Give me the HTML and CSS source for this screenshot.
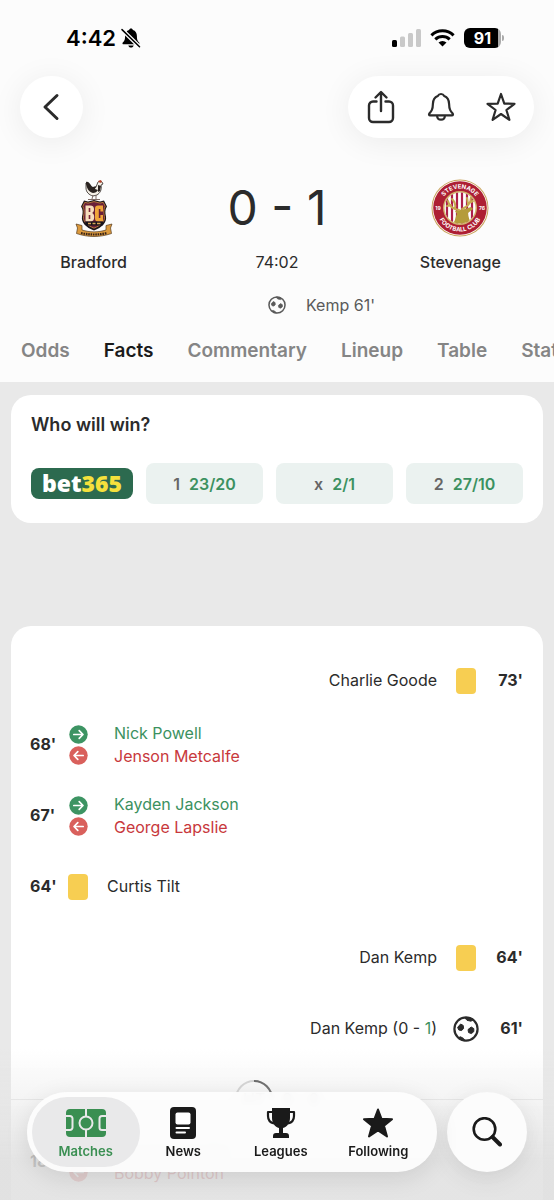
FILE: index.html
```html
<!DOCTYPE html>
<html lang="en">

<head>
    <meta charset="UTF-8">
    <meta name="viewport" content="width=device-width, initial-scale=1.0">
    <title>Bradford - Stevenage</title>
    <link rel="stylesheet" href="styles.css">
</head>

<body>
    <!-- shared icons -->
    <svg class="sprite" aria-hidden="true">
        <symbol id="ball" viewBox="0 0 26 26">
            <circle cx="13" cy="13" r="11.600" fill="none" stroke="currentColor" stroke-width="2.200" />
            <path d="M7.600 8l2.600 1.400.4 3-2 2.200-2.800-.6-1.200-2.600z" fill="currentColor" stroke="currentColor" stroke-width="1" stroke-linejoin="round" />
            <path d="M18.200 11l2.600 1.600v3l-2.400 2-2.800-1-.6-3z" fill="currentColor" stroke="currentColor" stroke-width="1" stroke-linejoin="round" />
            <path d="M11.500 1.500l2.500 2.800 4 .9 2-1.400-3-2zM5.500 21.600l2-.8 3 1.600 1.500 2.400-3.500-.8z" fill="currentColor" stroke="currentColor" stroke-width="1" stroke-linejoin="round" />
        </symbol>
        <symbol id="sub-in" viewBox="0 0 19 19">
            <circle cx="9.500" cy="9.500" r="9.200" fill="#3d9463" />
            <path d="M4.800 9.500h9M10.200 5.700l3.800 3.800-3.800 3.800" fill="none" stroke="#fff" stroke-width="1.700" stroke-linecap="round" stroke-linejoin="round" />
        </symbol>
        <symbol id="sub-out" viewBox="0 0 19 19">
            <circle cx="9.500" cy="9.500" r="9.200" fill="#d9605c" />
            <path d="M14.200 9.500h-9M8.800 5.700L5 9.500l3.800 3.800" fill="none" stroke="#fff" stroke-width="1.700" stroke-linecap="round" stroke-linejoin="round" />
        </symbol>
    </svg>

    <header class="header">
        <div class="status-bar">
            <div class="status-left">
                <span class="clock">4:42</span>
                <svg width="20" height="20" viewBox="0 0 20 20">
                    <path d="M10 .5c1.100 0 1.700.6 1.900 1.500 2.700.8 4 3 4 6 0 4 .8 5 2.200 6.500.7.8.3 1.800-.8 1.800H2.600c-1.100 0-1.500-1-.8-1.800C3.300 13 4.100 12 4.100 8c0-3 1.300-5.200 4-6 .2-.9.800-1.500 1.900-1.500zM7.300 17.500h5.400c-.3 1.300-1.300 2.100-2.700 2.100s-2.400-.8-2.700-2.100z" fill="#000" />
                    <path d="M1 1.600l17.500 17.200" stroke="#fff" stroke-width="4" />
                    <path d="M1 1.600l17.500 17.200" stroke="#000" stroke-width="1.500" stroke-linecap="round" />
                </svg>
            </div>
            <div class="status-right">
                <svg width="29" height="18" viewBox="0 0 29 18">
                    <rect x="0" y="11" width="5" height="7" rx="1.500" fill="#000" />
                    <rect x="8" y="7.500" width="5" height="10.500" rx="1.500" fill="#c9c9c9" />
                    <rect x="16" y="4" width="5" height="14" rx="1.500" fill="#c9c9c9" />
                    <rect x="24" y="0" width="5" height="18" rx="1.500" fill="#c9c9c9" />
                </svg>
                <svg width="25" height="18" viewBox="0 0 25 18">
                    <path d="M1.400 6.300a16 16 0 0 1 22.200 0M5.300 10.300a10.500 10.500 0 0 1 14.400 0" fill="none" stroke="#000" stroke-width="3" />
                    <path d="M12.500 17.600l-4-4.100a5.800 5.800 0 0 1 8 0z" fill="#000" />
                </svg>
                <div class="battery"><span class="battery-level">91</span></div>
            </div>
        </div>

        <div class="toolbar">
            <button class="glass back-btn" aria-label="Back">
                <svg width="20" height="28" viewBox="0 0 20 28">
                    <path d="M15 2.500L3 14l12 11.500" fill="none" stroke="#2b2b2b" stroke-width="3" stroke-linecap="round" stroke-linejoin="round" />
                </svg>
            </button>
            <div class="glass actions">
                <button class="icon-btn" aria-label="Share">
                    <svg width="28" height="34" viewBox="0 0 28 34">
                        <path d="M9.500 11.500H6a4 4 0 0 0-4 4v12.500a4 4 0 0 0 4 4h16a4 4 0 0 0 4-4V15.500a4 4 0 0 0-4-4h-3.500M14 21V2.500M8.500 7.500L14 2l5.500 5.500" fill="none" stroke="#2b2b2b" stroke-width="2.400" stroke-linecap="round" stroke-linejoin="round" />
                    </svg>
                </button>
                <button class="icon-btn" aria-label="Notifications">
                    <svg width="28" height="30" viewBox="0 0 28 30">
                        <path d="M14 2c1.900 0 2.700 1 3.200 2 3.300 1.200 4.800 4 4.900 8 .1 5.500 1.400 7 3.600 9.600.6.800.3 1.800-.8 1.800H3.100c-1.100 0-1.400-1-.8-1.800C4.500 19 5.800 17.500 5.900 12c.1-4 1.600-6.800 4.900-8 .5-1 1.300-2 3.200-2zM10 23.500c.2 2.600 1.700 4.200 4 4.200s3.800-1.600 4-4.200" fill="none" stroke="#2b2b2b" stroke-width="2.200" stroke-linejoin="round" />
                    </svg>
                </button>
                <button class="icon-btn" aria-label="Follow match">
                    <svg width="30" height="30" viewBox="0 0 30 30">
                        <path d="M15 2l3.300 9.600 10.200.2-8.100 6.200 3 9.800L15 22l-8.400 5.800 3-9.800-8.100-6.200 10.200-.2z" fill="none" stroke="#2b2b2b" stroke-width="2.200" stroke-linejoin="round" />
                    </svg>
                </button>
            </div>
        </div>

        <div class="scoreboard">
            <div class="team">
                <svg width="58" height="58" viewBox="0 0 58 58">
                    <!-- bantam -->
                    <path d="M21 4l3 4c2 3 5 3 7 0l2-5c1-1 3-1 4 0l1 2-2 1c1 5-1 8-4 10l-4 1c-4-1-7-4-7-8z" fill="#f4efe6" stroke="#2a2320" stroke-width=".8" />
                    <path d="M21 3c4-1 4 4 7 5l3-1-1 3 3 1c-1 2-3 3-5 3-4-1-7-5-7-11zM33 6l3 1-1 5-2 1z" fill="#2a2320" />
                    <path d="M33 2l3-1 1 2-2 1z" fill="#b5432c" />
                    <path d="M28 16l-1 4M31 16v4M23 20.500h12" stroke="#7d6a64" stroke-width="1" />
                    <!-- shield -->
                    <path d="M29 21l6 1.500 4-1 3 6c-2 3-2 6-1 10 1 6-4 11-12 14-8-3-13-8-12-14 1-4 1-7-1-10l3-6 4 1z" fill="#1d151c" />
                    <path d="M29 22.600l6 1.500 3.200-.8 2 4c-1.600 3-1.600 6-.8 10.200.8 5-3.400 8.800-10.400 11.700-7-2.900-11.200-6.700-10.400-11.700.8-4.200.8-7.200-.8-10.200l2-4 3.200.8z" fill="#6b1f38" stroke="#c98b3f" stroke-width=".8" />
                    <path d="M20.500 26.500h4.500c3 0 4 1.500 4 4 0 2-.8 3-2 3.500 1.500.5 2.200 2 2.200 4 0 3-1.200 4.500-4.200 4.500h-4.500z" fill="#f7dfbd" />
                    <path d="M24.500 29v4M24.500 36v4" stroke="#7c2437" stroke-width="1.600" />
                    <path d="M38 26.500v6h-2.600V30h-1.600v9h1.600v-3H38v6.500h-5c-2 0-3-1-3-3v-10c0-2 1-3 3-3z" fill="#f0a63a" />
                    <path d="M20 42.500h18.500l-1 4H21z" fill="#17121a" />
                    <path d="M23 44.500h3M27.500 44.500h3M32 44.500h3.500" stroke="#d8a458" stroke-width="1.400" />
                    <!-- ribbon -->
                    <path d="M11 45l6 1.500v4.500c8 2.500 16 2.500 24 0v-4.500l6-1.500-1.500 4 1 5.500c-12 4-23 4-35 0l1-5.500z" fill="#dc9a3e" stroke="#54391d" stroke-width=".7" />
                    <path d="M16 54c9 2 17 2 26 0" fill="none" stroke="#3a2418" stroke-width="2.200" stroke-dasharray="1.600 .8" />
                </svg>
                <span class="team-name">Bradford</span>
            </div>
            <div class="score-box">
                <span class="score">0 - 1</span>
                <span class="timer">74:02</span>
            </div>
            <div class="team">
                <svg width="58" height="58" viewBox="0 0 58 58">
                    <defs>
                        <clipPath id="inner"><circle cx="29" cy="29" r="15.500" /></clipPath>
                        <path id="arc-top" d="M9.500 29a19.500 19.500 0 0 1 39 0" />
                        <path id="arc-bottom" d="M5.500 29a23.500 23.500 0 0 0 47 0" />
                    </defs>
                    <circle cx="29" cy="29" r="28.500" fill="#c9a25a" />
                    <circle cx="29" cy="29" r="27.500" fill="#fff" />
                    <circle cx="29" cy="29" r="26.800" fill="#ad1f33" />
                    <circle cx="29" cy="29" r="17" fill="#d2b36c" />
                    <circle cx="29" cy="29" r="15.500" fill="#fff" />
                    <g clip-path="url(#inner)">
                        <path d="M16 12v34M21 12v34M26 12v34M31 12v34M36 12v34M41 12v34" stroke="#ad1f4a" stroke-width="2.200" />
                        <path d="M20 46c5-3 4-8 6-11l-2-3 4-1 6-1 6-2 2 2-5 4c0 4 2 8 4 12z" fill="#b59c3b" />
                        <path d="M28 31c-6-1-10-4-11-9M24 29c1-4-1-7-3-9M20 26l-4 1M31 30c5-2 9-6 9-12M37 25l-1-6M38 24l4-2" fill="none" stroke="#c6a951" stroke-width="2" stroke-linecap="round" />
                    </g>
                    <g class="crest-text" text-anchor="middle">
                        <text><textPath href="#arc-top" startOffset="50%">STEVENAGE</textPath></text>
                        <text><textPath href="#arc-bottom" startOffset="50%">FOOTBALL CLUB</textPath></text>
                        <text class="crest-year" x="7" y="31">19</text>
                        <text class="crest-year" x="51" y="31">76</text>
                    </g>
                </svg>
                <span class="team-name">Stevenage</span>
            </div>
        </div>

        <div class="scorers">
            <svg class="scorer-ball"><use href="#ball" /></svg>
            <span class="scorer-name">Kemp 61'</span>
        </div>

        <nav class="tabs">
            <a href="#" class="tab">Odds</a>
            <a href="#" class="tab active">Facts</a>
            <a href="#" class="tab">Commentary</a>
            <a href="#" class="tab">Lineup</a>
            <a href="#" class="tab">Table</a>
            <a href="#" class="tab">Stats</a>
        </nav>
    </header>

    <main class="content">
        <section class="card odds">
            <h2 class="card-title">Who will win?</h2>
            <div class="odds-row">
                <a href="#" class="bookmaker">bet<span class="bookmaker-num">365</span></a>
                <button class="odd"><span class="odd-key">1</span>23/20</button>
                <button class="odd"><span class="odd-key">x</span>2/1</button>
                <button class="odd"><span class="odd-key">2</span>27/10</button>
            </div>
        </section>

        <section class="card events">
            <div class="event away">
                <span class="minute">73'</span>
                <span class="event-icon"><i class="yellow-card"></i></span>
                <span class="player">Charlie Goode</span>
            </div>
            <div class="event">
                <span class="minute">68'</span>
                <span class="event-icon"><svg class="sub"><use href="#sub-in" /></svg><svg class="sub"><use href="#sub-out" /></svg></span>
                <div class="players">
                    <span class="in">Nick Powell</span>
                    <span class="out">Jenson Metcalfe</span>
                </div>
            </div>
            <div class="event">
                <span class="minute">67'</span>
                <span class="event-icon"><svg class="sub"><use href="#sub-in" /></svg><svg class="sub"><use href="#sub-out" /></svg></span>
                <div class="players">
                    <span class="in">Kayden Jackson</span>
                    <span class="out">George Lapslie</span>
                </div>
            </div>
            <div class="event">
                <span class="minute">64'</span>
                <span class="event-icon"><i class="yellow-card"></i></span>
                <span class="player">Curtis Tilt</span>
            </div>
            <div class="event away">
                <span class="minute">64'</span>
                <span class="event-icon"><i class="yellow-card"></i></span>
                <span class="player">Dan Kemp</span>
            </div>
            <div class="event away">
                <span class="minute">61'</span>
                <span class="event-icon"><svg class="goal"><use href="#ball" /></svg></span>
                <span class="player">Dan Kemp (0 - <span class="in">1</span>)</span>
            </div>
            <div class="half-time">
                <span class="ring">HT
                    <svg class="ring-arc" viewBox="0 0 38 38">
                        <circle cx="19" cy="19" r="18" fill="none" stroke="#cfcfcf" stroke-width="2" />
                        <path d="M19 1a18 18 0 0 1 18 18" fill="none" stroke="#444" stroke-width="2" />
                    </svg>
                </span>
                <span>0 - 0</span>
            </div>
            <div class="event">
                <span class="minute">18'</span>
                <span class="event-icon"><svg class="sub"><use href="#sub-in" /></svg><svg class="sub"><use href="#sub-out" /></svg></span>
                <div class="players">
                    <span class="in">George Lapslie</span>
                    <span class="out">Bobby Pointon</span>
                </div>
            </div>
        </section>
    </main>

    <footer class="bottom-bar">
        <nav class="nav-pill">
            <a href="#" class="nav-item selected">
                <svg width="40" height="32" viewBox="0 0 40 32">
                    <rect x="0" y="2" width="40" height="28" rx="4" fill="#3a8f52" />
                    <path d="M20 2v7M20 23v7M0 9h4a2.500 2.500 0 0 1 2.500 2.500v9A2.500 2.500 0 0 1 4 23H0M40 9h-4a2.500 2.500 0 0 0-2.500 2.500v9A2.500 2.500 0 0 0 36 23h4" fill="none" stroke="#e9e9ea" stroke-width="2" />
                    <circle cx="20" cy="16" r="6.500" fill="none" stroke="#e9e9ea" stroke-width="2" />
                </svg>
                <span>Matches</span>
            </a>
            <a href="#" class="nav-item">
                <svg width="26" height="32" viewBox="0 0 26 32">
                    <rect x="0" y="0" width="26" height="32" rx="4" fill="#1a1a1a" />
                    <rect x="5.500" y="5.500" width="15" height="12" rx="2" fill="#fff" />
                    <path d="M6.500 21h12.500M6.500 25.500h8.500" stroke="#fff" stroke-width="2" stroke-linecap="round" />
                </svg>
                <span>News</span>
            </a>
            <a href="#" class="nav-item">
                <svg width="30" height="32" viewBox="0 0 30 32">
                    <path d="M6 1h18v10c0 5-3 9-7 10v5h3c2 0 3 1 3 3v2H7v-2c0-2 1-3 3-3h3v-5c-4-1-7-5-7-10z" fill="#1a1a1a" />
                    <path d="M6 5H2v4c0 4 2 6.500 6 7.500M24 5h4v4c0 4-2 6.500-6 7.500" fill="none" stroke="#1a1a1a" stroke-width="2.200" stroke-linejoin="round" />
                </svg>
                <span>Leagues</span>
            </a>
            <a href="#" class="nav-item">
                <svg width="32" height="32" viewBox="0 0 32 32">
                    <path d="M16 2.500l3.500 9.300 10.500.4-8 6.500 3 10.800-9-6-9 6 3-10.800-8-6.500 10.500-.4z" fill="#1a1a1a" stroke="#1a1a1a" stroke-width="2" stroke-linejoin="round" />
                </svg>
                <span>Following</span>
            </a>
        </nav>
        <button class="search-btn" aria-label="Search">
            <svg width="30" height="30" viewBox="0 0 30 30">
                <circle cx="12.500" cy="12" r="10.800" fill="none" stroke="#1a1a1a" stroke-width="2.600" />
                <path d="M20.500 20l7.500 7.500" stroke="#1a1a1a" stroke-width="4" stroke-linecap="round" />
            </svg>
        </button>
    </footer>
</body>

</html>
```
FILE: styles.css
```css
* {
    box-sizing: border-box;
}

body {
    margin: 0;
    height: 100vh;
    overflow: hidden;
    font-family: Inter, "Liberation Sans", sans-serif;
    font-size: 16px;
    color: #2b2b2b;
    background-color: #e9e9e9;
}

a {
    color: inherit;
    text-decoration: none;
}

button {
    font: inherit;
    color: inherit;
    border: none;
    padding: 0;
    background: none;
    cursor: pointer;
}

svg {
    display: block;
    flex-shrink: 0;
}

.sprite {
    position: absolute;
    width: 0;
    height: 0;
}

/* header */
.header {
    background-color: #fcfcfc;
    overflow: hidden;
}

.status-bar {
    display: flex;
    justify-content: space-between;
    align-items: center;
    height: 76px;
    padding: 0 50px 0 66px;
}

.status-left {
    display: flex;
    align-items: center;
    gap: 5px;
}

.clock {
    font-size: 22px;
    font-weight: 600;
    color: #000;
}

.status-right {
    display: flex;
    align-items: center;
    gap: 9px;
}

.battery {
    display: flex;
    align-items: center;
    gap: 1px;
}

.battery-level {
    width: 37px;
    height: 20px;
    border-radius: 6px;
    background: linear-gradient(to right, #000 91%, #aaa 91%);
    color: #fff;
    font-size: 16px;
    font-weight: 700;
    line-height: 20px;
    text-align: center;
}

.battery::after {
    content: "";
    width: 2px;
    height: 6px;
    border-radius: 0 2px 2px 0;
    background-color: #aaa;
}

.toolbar {
    display: flex;
    justify-content: space-between;
    padding: 0 20px;
}

.glass {
    height: 62px;
    border-radius: 31px;
    background-color: #fff;
    box-shadow: 0 4px 32px rgba(0, 0, 0, 0.07);
}

.back-btn {
    display: flex;
    align-items: center;
    justify-content: center;
    width: 63px;
}

.actions {
    display: flex;
    align-items: center;
    padding: 0 3px;
}

.icon-btn {
    display: flex;
    align-items: center;
    justify-content: center;
    width: 60px;
    height: 62px;
}

.scoreboard {
    display: grid;
    grid-template-columns: 1fr 1fr 1fr;
    padding: 41px 2px 0;
}

.team,
.score-box {
    display: flex;
    flex-direction: column;
    align-items: center;
    gap: 15px;
}

.team-name,
.timer {
    font-size: 16px;
    line-height: 20px;
}

.team-name {
    font-weight: 500;
}

.score {
    font-size: 48px;
    line-height: 58px;
}

.crest-text {
    font-size: 6px;
    font-weight: 700;
    fill: #fff;
}

.crest-year {
    font-size: 5px;
}

.scorers {
    display: flex;
    align-items: center;
    gap: 20px;
    padding-top: 23px;
    padding-left: calc(50% - 9px);
    color: #5a5a5a;
}

.scorer-ball {
    width: 18px;
    height: 18px;
}

.scorer-name {
    line-height: 20px;
}

.tabs {
    display: flex;
    gap: 34px;
    padding: 23px 21px 18px;
    font-size: 19px;
    font-weight: 600;
    line-height: 26px;
    color: #858585;
    white-space: nowrap;
}

.tab.active {
    color: #1a1a1a;
}

/* cards */
.content {
    padding: 13px 11px;
}

.card {
    background-color: #fff;
    border-radius: 20px;
}

.odds {
    padding: 20px 20px 19px;
}

.card-title {
    margin: 0 0 28px;
    font-size: 18px;
    font-weight: 600;
    line-height: 20px;
}

.odds-row {
    display: grid;
    grid-template-columns: 102px 1fr 1fr 1fr;
    align-items: center;
    gap: 13px;
}

.bookmaker {
    height: 31px;
    border-radius: 8px;
    background-color: #2c6a4f;
    color: #fff;
    font-family: "Noto Sans", "Open Sans", sans-serif;
    font-size: 23px;
    font-weight: 900;
    line-height: 30px;
    text-align: center;
}

.bookmaker-num {
    color: #f5e13c;
}

.odd {
    height: 41px;
    border-radius: 8px;
    background-color: #ebf2f0;
    color: #3b9160;
    font-weight: 600;
}

.odd-key {
    margin-right: 9px;
    color: #666;
}

/* match events */
.events {
    margin-top: 103px;
    padding: 26px 20px 19px 19px;
}

.event {
    display: flex;
    align-items: center;
    height: 71px;
    line-height: 23px;
}

.event:first-child {
    height: 57px;
}

.away {
    flex-direction: row-reverse;
}

.minute {
    width: 35px;
    font-weight: 700;
}

.away .minute {
    width: 44px;
    text-align: right;
}

.event-icon {
    display: flex;
    flex-direction: column;
    align-items: center;
    gap: 2px;
    width: 26px;
    margin-right: 16px;
}

.away .event-icon {
    margin: 0 0 0 16px;
}

.yellow-card {
    width: 20px;
    height: 26px;
    border-radius: 4px;
    background-color: #f7ce52;
}

.sub {
    width: 19px;
    height: 19px;
}

.goal {
    width: 26px;
    height: 26px;
}

.players {
    display: flex;
    flex-direction: column;
    margin-left: 7px;
}

.in {
    color: #3b9160;
}

.out {
    color: #c8383c;
}

.half-time {
    display: flex;
    align-items: center;
    justify-content: center;
    gap: 9px;
    height: 62px;
    margin: 4px -20px -4px -19px;
    background: linear-gradient(#e6e6e6, #e6e6e6) center / 100% 1px no-repeat;
}

.ring {
    position: relative;
    width: 38px;
    line-height: 38px;
    text-align: center;
}

.ring-arc {
    position: absolute;
    inset: 0;
}

/* floating bottom navigation */
.bottom-bar {
    position: fixed;
    left: 0;
    right: 0;
    bottom: 0;
    display: flex;
    gap: 10px;
    padding: 43px 27px 28px;
    background: linear-gradient(rgba(232, 232, 232, 0), rgba(228, 228, 228, 0.6) 50%, rgba(224, 224, 224, 0.85) 75%);
}

.nav-pill {
    flex: 1;
    display: grid;
    grid-template-columns: 1fr 1fr 1fr 1fr;
    padding: 5px 10px;
    border-radius: 40px;
    background-color: rgba(253, 253, 253, 0.93);
    backdrop-filter: blur(3px);
    box-shadow: 0 6px 24px rgba(0, 0, 0, 0.1);
}

.nav-item {
    display: flex;
    flex-direction: column;
    align-items: center;
    justify-content: center;
    gap: 4px;
    height: 70px;
    margin: 0 -5px;
    padding-top: 2px;
    border-radius: 35px;
    color: #1a1a1a;
    font-size: 13px;
    font-weight: 600;
    line-height: 16px;
}

.nav-item.selected {
    background-color: #e9e9ea;
    color: #3a8f52;
}

.search-btn {
    display: flex;
    align-items: center;
    justify-content: center;
    width: 80px;
    height: 80px;
    border-radius: 50%;
    background-color: #fcfcfc;
    box-shadow: 0 6px 24px rgba(0, 0, 0, 0.1);
}
```
